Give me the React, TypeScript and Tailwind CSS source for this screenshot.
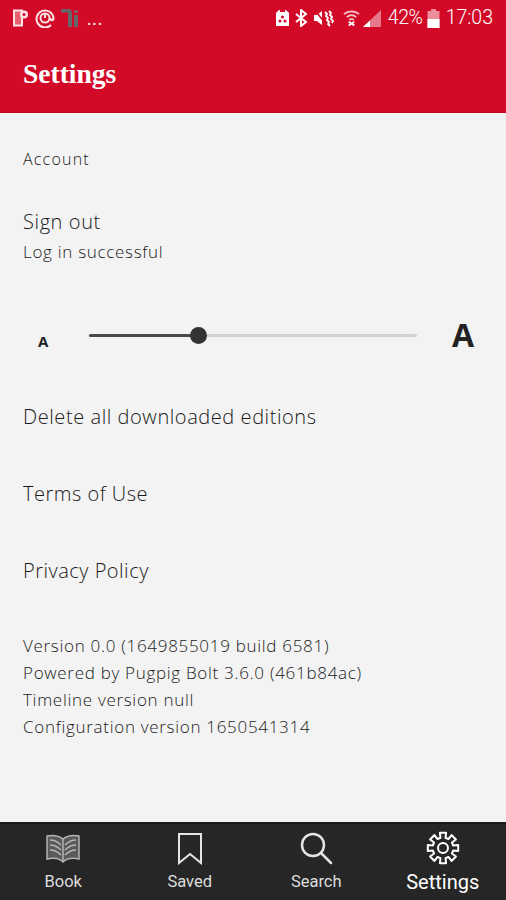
const sans = "font-['Open_Sans',sans-serif]";

// 8 teeth, traced as one outline
const gearPath = Array.from({ length: 8 })
  .map((_, i) => {
    const a = (i * Math.PI) / 4;
    const pt = (r: number, d: number) =>
      `${(17 + r * Math.sin(a + d)).toFixed(2)} ${(17 - r * Math.cos(a + d)).toFixed(2)}`;
    return `${i === 0 ? "M" : "L"}${pt(10.5, -0.24)} L${pt(15.5, -0.2)} L${pt(15.5, 0.2)} L${pt(10.5, 0.24)}`;
  })
  .join(" ") + "Z";

function StatusLeft() {
  return (
    <div className="flex items-center gap-[6px]">
      <svg width="17" height="18" viewBox="0 0 17 18" fill="none">
        <path d="M2 1.500h8v15H2z" stroke="#fbe3e6" strokeWidth="2" fill="#e8606f" />
        <circle cx="12" cy="5.500" r="4" fill="#fbe3e6" />
        <circle cx="12" cy="5.500" r="1.500" fill="#d20a28" />
      </svg>
      <svg width="20" height="20" viewBox="0 0 20 20" fill="none" stroke="#fbe3e6" strokeWidth="2">
        <path d="M16 17a8.500 8.500 0 1 1 2.500-7c0 3-3 3-3 0" />
        <circle cx="10" cy="10" r="4.500" />
        <path d="M10 6v4" />
      </svg>
      <svg width="19" height="20" viewBox="0 0 19 20" fill="#666666">
        <path d="M0 1h9l2 3v15H7V4.500H0z" />
        <path d="M13 7h4v12h-4z" />
        <path d="M13 2h4v3h-4z" fill="#8a5560" />
      </svg>
      <span className="ml-[1px] mt-[4px] text-[15px] leading-none font-bold tracking-[1px] text-[#fbe3e6] font-['Roboto',sans-serif]">
        ...
      </span>
    </div>
  );
}

function StatusRight() {
  return (
    <div className="flex items-center text-white">
      <svg width="15" height="18" viewBox="0 0 15 18" fill="#fff">
        <path d="M1 4l3-3h7l3 3v13H1z" />
        <path d="M5 1h5v2H5z" fill="#d20a28" />
        <circle cx="7.500" cy="8" r="1.500" fill="#d20a28" />
        <circle cx="5" cy="12" r="1.500" fill="#d20a28" />
        <circle cx="10" cy="12" r="1.500" fill="#d20a28" />
      </svg>
      <svg className="ml-[5px]" width="13" height="18" viewBox="0 0 13 18" fill="none" stroke="#fff" strokeWidth="2">
        <path d="M1 5l10 8-5 4V1l5 4-10 8" />
      </svg>
      <svg className="ml-[6px]" width="20" height="18" viewBox="0 0 20 18" fill="#fff">
        <path d="M0 6h3l5-4v14l-5-4H0z" />
        <path d="M1 1l12 16" stroke="#d20a28" strokeWidth="1.500" />
        <path d="M11 3l2 2-1 2 2 2-1 2 2 2-1 2 2 2" fill="none" stroke="#fff" strokeWidth="1.800" />
        <path d="M15 2l2 2-1 2 2 2-1 2 2 2-1 2" fill="none" stroke="#fff" strokeWidth="1.800" />
      </svg>
      <svg className="ml-[9px]" width="17" height="18" viewBox="0 0 18 18" fill="none" stroke="#f6c5cb" strokeWidth="1.800">
        <path d="M1 5c4.500-4 11.500-4 16 0" />
        <path d="M4 8c3-2.500 7-2.500 10 0" />
        <path d="M6.500 11c1.500-1 3.500-1 5 0" />
        <path d="M6 13l6 4M12 13l-6 4" stroke="#fff" />
      </svg>
      <svg className="ml-[3px]" width="18" height="18" viewBox="0 0 18 18">
        <path d="M0 18L18 1v17z" fill="#e8798a" />
        <path d="M0 18l7-6.500V18z" fill="#fff" />
      </svg>
      <span className="ml-[7px] text-[19.500px] leading-none font-['Roboto',sans-serif] tracking-[-0.4px]">42%</span>
      <svg className="ml-[4px]" width="13" height="19" viewBox="0 0 12 19">
        <path d="M3.500 0h5v2H12v17H0V2h3.500z" fill="#ee8d9b" />
        <path d="M0 10h12v9H0z" fill="#fff" />
      </svg>
      <span className="ml-[6px] text-[19.500px] leading-none font-['Roboto',sans-serif]">17:03</span>
    </div>
  );
}

function NavItem({ label, active, children }: { label: string; active?: boolean; children: React.ReactNode }) {
  return (
    <div className="flex-1 flex flex-col items-center">
      <div className="h-[34px] flex items-center justify-center">{children}</div>
      <span
        className={`font-['Roboto',sans-serif] leading-none ${
          active ? "mt-[7px] text-[20px] text-white" : "mt-[9px] text-[16.500px] text-[#dedede]"
        }`}
      >
        {label}
      </span>
    </div>
  );
}

export default function App() {
  return (
    <div className={`w-[506px] h-[900px] flex flex-col bg-[#f3f3f3] text-[#1a1a1a] font-light overflow-hidden ${sans}`}>
      <header className="h-[113px] shrink-0 bg-[#d20a28] border-b border-[#c0081f] pl-[12px] pr-[13px] flex flex-col">
        <div className="h-[36px] flex items-center justify-between">
          <StatusLeft />
          <StatusRight />
        </div>
        <h1 className="mt-[21px] ml-[11px] text-[27.500px] leading-[34px] font-bold text-white font-['Liberation_Serif',serif]">
          Settings
        </h1>
      </header>

      <main className="flex-1 px-[23px] flex flex-col">
        <p className="mt-[35px] text-[16px] leading-[22px] tracking-[1.200px]">Account</p>
        <p className="mt-[38px] text-[20px] leading-[28px] tracking-[0.6px]">Sign out</p>
        <p className="mt-[4px] text-[17px] leading-[24px] tracking-[0.700px]">Log in successful</p>

        <div className="mt-[46px] flex items-center h-[50px]">
          <span className="w-[42px] pl-[15px] mt-[13px] text-[15px] leading-none font-bold text-[#222222]">A</span>
          <div className="ml-[24px] w-[328px] h-[3px] bg-[#d2d2d2] rounded-full relative">
            <div className="w-[110px] h-full bg-[#4a4a4a] rounded-full" />
            <div className="absolute left-[101px] top-[-7px] w-[17px] h-[17px] rounded-full bg-[#333333]" />
          </div>
          <span className="ml-[35px] text-[32px] leading-none font-bold text-[#222222]">A</span>
        </div>

        <p className="mt-[43px] text-[20px] leading-[28px] tracking-[0.570px]">Delete all downloaded editions</p>
        <p className="mt-[49px] text-[20px] leading-[28px] tracking-[0.500px]">Terms of Use</p>
        <p className="mt-[49px] text-[20px] leading-[28px] tracking-[0.500px]">Privacy Policy</p>

        <div className="mt-[47px] text-[17px] leading-[27px] tracking-[0.700px]">
          <p>Version 0.0 (1649855019 build 6581)</p>
          <p>Powered by Pugpig Bolt 3.6.0 (461b84ac)</p>
          <p>Timeline version null</p>
          <p>Configuration version 1650541314</p>
        </div>
      </main>

      <nav className="h-[78px] shrink-0 bg-[#262626] border-t-2 border-[#1a1a1a] flex pt-[7px] font-normal">
        <NavItem label="Book">
          <svg width="34" height="30" viewBox="0 0 34 30" fill="#5a5a5a" stroke="#b4b4b4" strokeWidth="1.500">
            <path d="M1 3c5-1 11-1 16 3 5-4 11-4 16-3v23c-5-1-12-1-16 3-4-4-11-4-16-3z" />
            <path d="M17 6v22" />
            <path d="M4 7c5 0 8 2 11 5M4 12c5 0 8 2 11 5M4 17c5 0 8 2 11 5M30 7c-5 0-8 2-11 5M30 12c-5 0-8 2-11 5M30 17c-5 0-8 2-11 5" fill="none" />
          </svg>
        </NavItem>
        <NavItem label="Saved">
          <svg width="26" height="33" viewBox="0 0 26 33" fill="none" stroke="#e4e4e4" strokeWidth="2">
            <path d="M2 2h22v29l-11-9-11 9z" />
          </svg>
        </NavItem>
        <NavItem label="Search">
          <svg width="34" height="34" viewBox="0 0 34 34" fill="none" stroke="#e4e4e4" strokeWidth="2.500" strokeLinecap="round">
            <circle cx="14" cy="14" r="11" />
            <path d="M22 22l10 10" />
          </svg>
        </NavItem>
        <NavItem label="Settings" active>
          <svg width="34" height="34" viewBox="0 0 34 34" fill="none" stroke="#ffffff" strokeWidth="2" strokeLinejoin="round">
            <path d={gearPath} />
            <circle cx="17" cy="17" r="5" />
          </svg>
        </NavItem>
      </nav>
    </div>
  );
}
